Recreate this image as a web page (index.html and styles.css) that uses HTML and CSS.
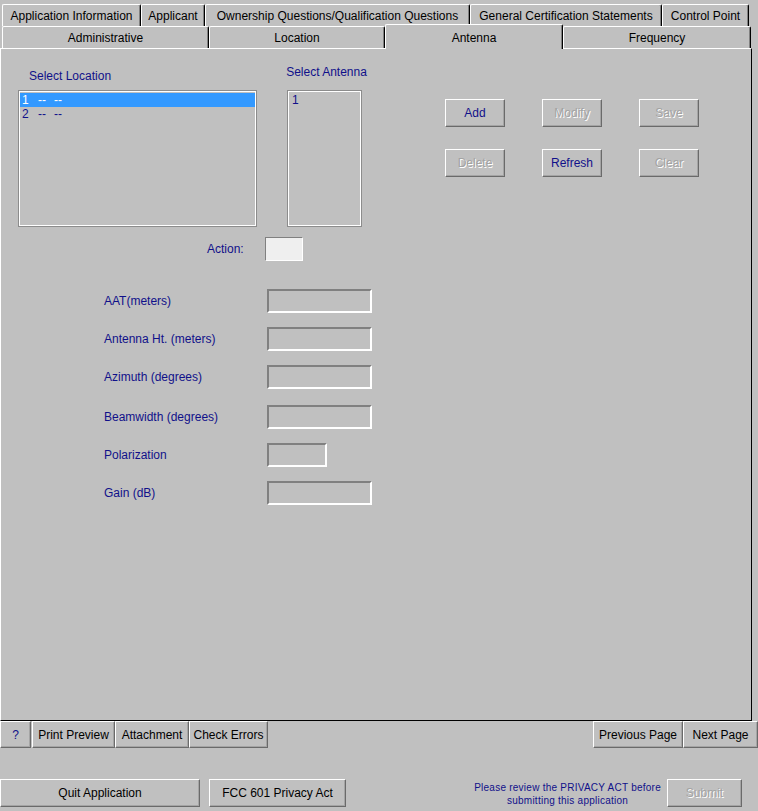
FILE: index.html
```html
<!DOCTYPE html>
<html lang="en">
<head>
  <meta charset="UTF-8" />
  <title>Antenna</title>
  <link rel="stylesheet" href="styles.css">
</head>
<body>

  <div class="tabs">
    <div class="tab-row">
      <div class="tab w-appinfo">Application Information</div>
      <div class="tab w-applicant">Applicant</div>
      <div class="tab w-owner">Ownership Questions/Qualification Questions</div>
      <div class="tab w-general">General Certification Statements</div>
      <div class="tab w-control">Control Point</div>
    </div>
    <div class="tab-row">
      <div class="tab w-admin">Administrative</div>
      <div class="tab w-location">Location</div>
      <div class="tab w-antenna selected">Antenna</div>
      <div class="tab w-freq">Frequency</div>
    </div>
  </div>

  <div class="panel">
    <div class="top">
      <div class="loc">
        <div class="label loc-label">Select Location</div>
        <div class="list loc-list">
          <div class="item selected-item"><span class="c1">1</span><span class="c2">--</span><span>--</span></div>
          <div class="item"><span class="c1">2</span><span class="c2">--</span><span>--</span></div>
        </div>
      </div>
      <div class="ant">
        <div class="label ant-label">Select Antenna</div>
        <div class="list ant-list">
          <div class="item">1</div>
        </div>
      </div>
      <div class="btns">
        <button class="btn act">Add</button>
        <button class="btn act" disabled>Modify</button>
        <button class="btn act" disabled>Save</button>
        <button class="btn act" disabled>Delete</button>
        <button class="btn act">Refresh</button>
        <button class="btn act" disabled>Clear</button>
      </div>
    </div>

    <div class="action">
      <span class="label">Action:</span>
      <div class="action-box"></div>
    </div>

    <div class="fields">
      <div class="field"><span class="label">AAT(meters)</span><div class="input"></div></div>
      <div class="field"><span class="label">Antenna Ht. (meters)</span><div class="input"></div></div>
      <div class="field"><span class="label">Azimuth (degrees)</span><div class="input"></div></div>
      <div class="field beam"><span class="label">Beamwidth (degrees)</span><div class="input"></div></div>
      <div class="field"><span class="label">Polarization</span><div class="input short"></div></div>
      <div class="field"><span class="label">Gain (dB)</span><div class="input"></div></div>
    </div>
  </div>

  <div class="toolbar">
    <div class="tool-group">
      <button class="btn tool help">?</button>
      <button class="btn tool print">Print Preview</button>
      <button class="btn tool attach">Attachment</button>
      <button class="btn tool check">Check Errors</button>
    </div>
    <div class="tool-group">
      <button class="btn tool prev">Previous Page</button>
      <button class="btn tool next">Next Page</button>
    </div>
  </div>

  <div class="footer">
    <button class="btn quit">Quit Application</button>
    <button class="btn privacy">FCC 601 Privacy Act</button>
    <div class="note">Please review the PRIVACY ACT before<br>submitting this application</div>
    <button class="btn submit" disabled>Submit</button>
  </div>

</body>
</html>
```

FILE: styles.css
```css
html, body {
  margin: 0;
  padding: 0;
}

body {
  width: 758px;
  height: 811px;
  overflow: hidden;
  background: #c0c0c0;
  font-family: "Liberation Sans", Arial, sans-serif;
  font-size: 12px;
  color: #000;
}

/* tabs */
.tabs {
  padding: 4px 0 0 2px;
}

.tab-row {
  display: flex;
  height: 22px;
}

.tab {
  box-sizing: border-box;
  height: 22px;
  padding-top: 1px;
  line-height: 21px;
  text-align: center;
  white-space: nowrap;
  background: #c0c0c0;
  border-top: 1px solid #fff;
  border-left: 1px solid #fff;
  border-right: 1px solid #000;
  box-shadow: inset -1px 0 #808080;
  border-radius: 2px 2px 0 0;
}

.tab.selected {
  position: relative;
  z-index: 1;
  height: 25px;
  margin-top: -2px;
  padding-top: 3px;
}

.w-appinfo { width: 139px; }
.w-applicant { width: 64px; }
.w-owner { width: 265px; }
.w-general { width: 192px; }
.w-control { width: 87px; }
.w-admin { width: 207px; }
.w-location { width: 176px; }
.w-antenna { width: 178px; }
.w-freq { width: 188px; }

/* panel */
.panel {
  box-sizing: border-box;
  width: 752px;
  height: 673px;
  border-top: 1px solid #fff;
  border-left: 1px solid #fff;
  border-right: 1px solid #000;
  border-bottom: 1px solid #000;
}

.label {
  color: #10108a;
  line-height: 14px;
  white-space: nowrap;
}

.top {
  display: flex;
  align-items: flex-start;
}

.loc {
  margin: 20px 0 0 17px;
}

.loc-label {
  margin: 0 0 7px 11px;
}

.ant {
  width: 75px;
  margin: 16px 0 0 30px;
}

.ant-label {
  width: 95px;
  margin: 0 0 11px -8px;
  text-align: center;
}

.list {
  box-sizing: border-box;
  height: 137px;
  padding: 2px 1px;
  border: 1px solid #8c8c8c;
  box-shadow: inset 0 0 0 1px #fff;
}

.loc-list { width: 239px; }
.ant-list { width: 75px; }

.item {
  height: 14px;
  line-height: 14px;
  padding-left: 2px;
  color: #10108a;
}

.ant-list .item {
  padding-left: 3px;
}

.selected-item {
  background: #3399ff;
  color: #fff;
}

.c1, .c2 {
  display: inline-block;
  width: 16px;
}

/* buttons */
.btn {
  box-sizing: border-box;
  padding: 0;
  margin: 0;
  background: #c0c0c0;
  font-family: inherit;
  font-size: 12px;
  color: #000;
  white-space: nowrap;
  border: 1px solid;
  border-color: #fff #6a6a6a #6a6a6a #fff;
  box-shadow: inset -1px -1px #a4a4a4;
  border-radius: 0;
}

.btn:disabled {
  color: #a3a3a3;
  text-shadow: 1px 1px 0 #fff;
}

.btns {
  display: grid;
  grid-template-columns: repeat(3, 60px);
  column-gap: 37px;
  row-gap: 22px;
  margin: 50px 0 0 83px;
}

.act {
  height: 28px;
  color: #10108a;
}

/* action + fields */
.action {
  display: flex;
  align-items: center;
  gap: 21px;
  margin-top: 10px;
  padding-left: 206px;
}

.action-box {
  box-sizing: border-box;
  width: 38px;
  height: 24px;
  background: #efefef;
  border: 1px solid;
  border-color: #808080 #fff #fff #808080;
}

.fields {
  display: flex;
  flex-direction: column;
  gap: 14px;
  margin-top: 28px;
  padding-left: 103px;
}

.field {
  display: flex;
  align-items: center;
}

.field.beam {
  margin-top: 2px;
}

.field .label {
  width: 163px;
}

.input {
  box-sizing: border-box;
  width: 105px;
  height: 24px;
  border: 2px solid;
  border-color: #808080 #fff #fff #808080;
}

.input.short {
  width: 60px;
}

/* bottom toolbar */
.toolbar {
  display: flex;
  justify-content: space-between;
  height: 27px;
}

.tool-group {
  display: flex;
}

.tool {
  height: 27px;
}

.help { width: 31px; margin-right: 1px; color: #10108a; }
.print { width: 83px; }
.attach { width: 74px; }
.check { width: 79px; }
.prev { width: 90px; }
.next { width: 75px; }

/* footer */
.footer {
  display: flex;
  align-items: center;
  margin-top: 31px;
}

.quit {
  width: 200px;
  height: 28px;
}

.privacy {
  width: 137px;
  height: 28px;
  margin-left: 9px;
}

.note {
  margin-left: auto;
  text-align: center;
  font-size: 10px;
  letter-spacing: 0.25px;
  line-height: 13px;
  color: #10108a;
  padding-top: 2px;
}

.submit {
  width: 75px;
  height: 28px;
  margin: 0 16px 0 6px;
}
```
